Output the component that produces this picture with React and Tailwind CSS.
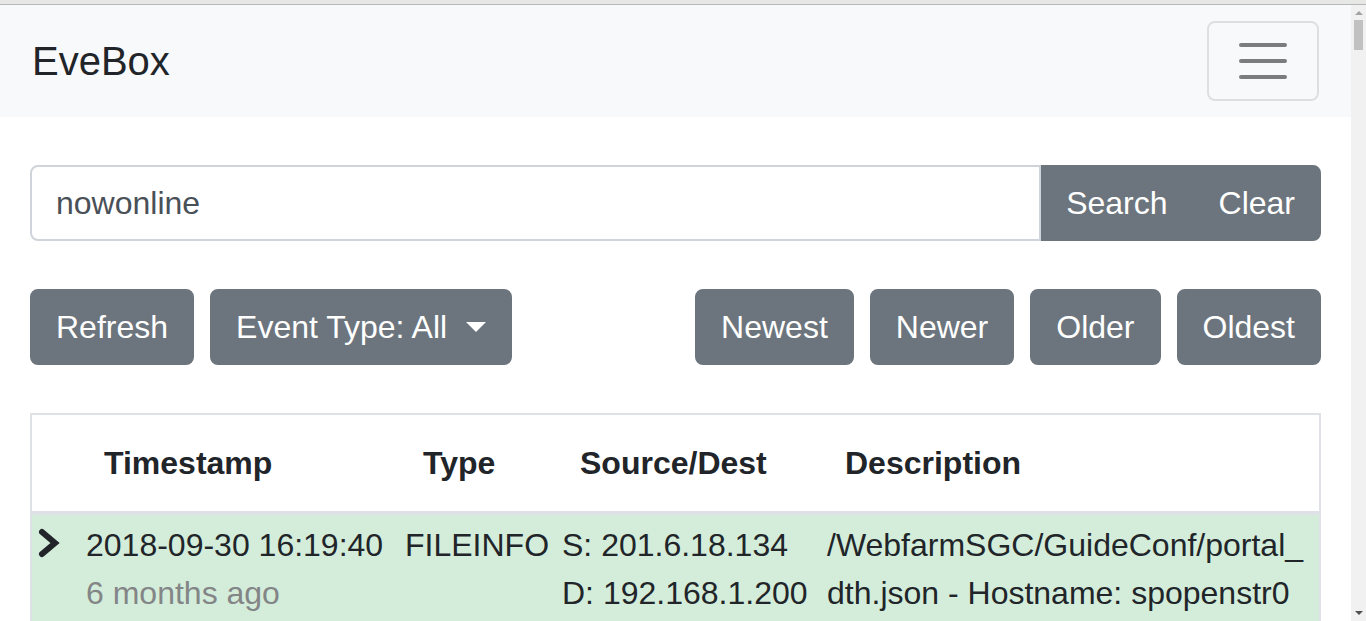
import React from 'react';

const Btn = ({ children, className = '' }) => (
  <button className={`h-[76px] border-2 border-[#6c757d] bg-[#6c757d] text-white text-[32px] leading-[48px] rounded-[8px] whitespace-nowrap ${className}`}>
    {children}
  </button>
);

const Chevron = () => (
  <svg width="24" height="30" viewBox="0 0 24 30" className="block mt-[7px]">
    <polyline points="4,4 17,15 4,26" fill="none" stroke="#212529" strokeWidth="6" strokeLinejoin="miter" strokeLinecap="round" />
  </svg>
);

const App = () => {
  return (
    <div className="h-[621px] overflow-hidden flex flex-col bg-white text-[#212529] font-['Liberation_Sans',Arial,sans-serif]">
      {/* window strip */}
      <div className="h-[5px] shrink-0 bg-[#e7e7e6] border-b border-[#b8b8b8]" />

      <div className="flex flex-1 min-h-0">
        <div className="flex-1 min-w-0 overflow-hidden">
          {/* NAVBAR */}
          <nav className="bg-[#f8f9fa] h-[112px] pl-[32px] pr-[32px] flex items-center justify-between">
            <span className="text-[40px] leading-[60px] text-[#212529]">EveBox</span>
            <button className="w-[112px] h-[80px] border-2 border-black/10 rounded-[8px] flex items-center justify-center">
              <svg width="60" height="60" viewBox="0 0 30 30">
                <path d="M4 7h22M4 15h22M4 23h22" stroke="rgba(0,0,0,0.5)" strokeWidth="2" strokeLinecap="round" />
              </svg>
            </button>
          </nav>

          <main className="px-[30px] pt-[48px]">
            {/* SEARCH */}
            <div className="flex h-[76px]">
              <div className="flex-1 border-2 border-[#ced4da] rounded-l-[8px] px-[24px] flex items-center text-[32px] leading-[48px] text-[#495057]">
                nowonline
              </div>
              <Btn className="rounded-none px-[23px]">Search</Btn>
              <Btn className="rounded-l-none px-[24px]">Clear</Btn>
            </div>

            {/* ACTIONS */}
            <div className="mt-[48px] flex justify-between">
              <div className="flex gap-[16px]">
                <Btn className="px-[24px]">Refresh</Btn>
                <Btn className="px-[24px] flex items-center">
                  Event Type: All
                  <span className="ml-[19px] inline-block w-0 h-0 border-t-[10px] border-t-white border-x-[10px] border-x-transparent" />
                </Btn>
              </div>
              <div className="flex gap-[16px]">
                <Btn className="px-[24px]">Newest</Btn>
                <Btn className="px-[24px]">Newer</Btn>
                <Btn className="px-[24px]">Older</Btn>
                <Btn className="px-[24px]">Oldest</Btn>
              </div>
            </div>

            {/* EVENTS TABLE */}
            <div className="mt-[48px] border-2 border-[#dee2e6]">
              <table className="w-full table-fixed border-collapse text-[32px] leading-[48px]">
                <colgroup>
                  <col className="w-[48px]" />
                  <col className="w-[319px]" />
                  <col className="w-[157px]" />
                  <col className="w-[265px]" />
                  <col />
                </colgroup>
                <thead>
                  <tr className="border-b-4 border-[#dee2e6]">
                    <th className="p-[24px]" />
                    <th className="p-[24px] text-left font-bold whitespace-nowrap">Timestamp</th>
                    <th className="p-[24px] text-left font-bold whitespace-nowrap">Type</th>
                    <th className="p-[24px] text-left font-bold whitespace-nowrap">Source/Dest</th>
                    <th className="p-[24px] text-left font-bold whitespace-nowrap">Description</th>
                  </tr>
                </thead>
                <tbody>
                  <tr className="bg-[#d4edda] align-top">
                    <td className="p-[6px]"><Chevron /></td>
                    <td className="p-[6px] whitespace-nowrap">
                      <div>2018-09-30 16:19:40</div>
                      <div className="text-[#838587]">6 months ago</div>
                    </td>
                    <td className="p-[6px] whitespace-nowrap">FILEINFO</td>
                    <td className="p-[6px] whitespace-nowrap">
                      <div>S: 201.6.18.134</div>
                      <div>D: 192.168.1.200</div>
                    </td>
                    <td className="p-[6px] break-all">
                      /WebfarmSGC/GuideConf/portal_dth.json - Hostname: spopenstr01.nowonline.com.br
                    </td>
                  </tr>
                </tbody>
              </table>
            </div>
          </main>
        </div>

        {/* SCROLLBAR */}
        <div className="w-[15px] shrink-0 bg-[#f1f1f1] flex flex-col items-center">
          <span className="mt-[6px] w-0 h-0 border-b-[4px] border-b-[#a3a3a3] border-x-[4px] border-x-transparent" />
          <div className="mt-[5px] w-[9px] h-[30px] bg-[#c1c1c1]" />
          <div className="flex-1" />
          <span className="mb-[6px] w-0 h-0 border-t-[4px] border-t-[#505050] border-x-[4px] border-x-transparent" />
        </div>
      </div>
    </div>
  );
};

export default App;
